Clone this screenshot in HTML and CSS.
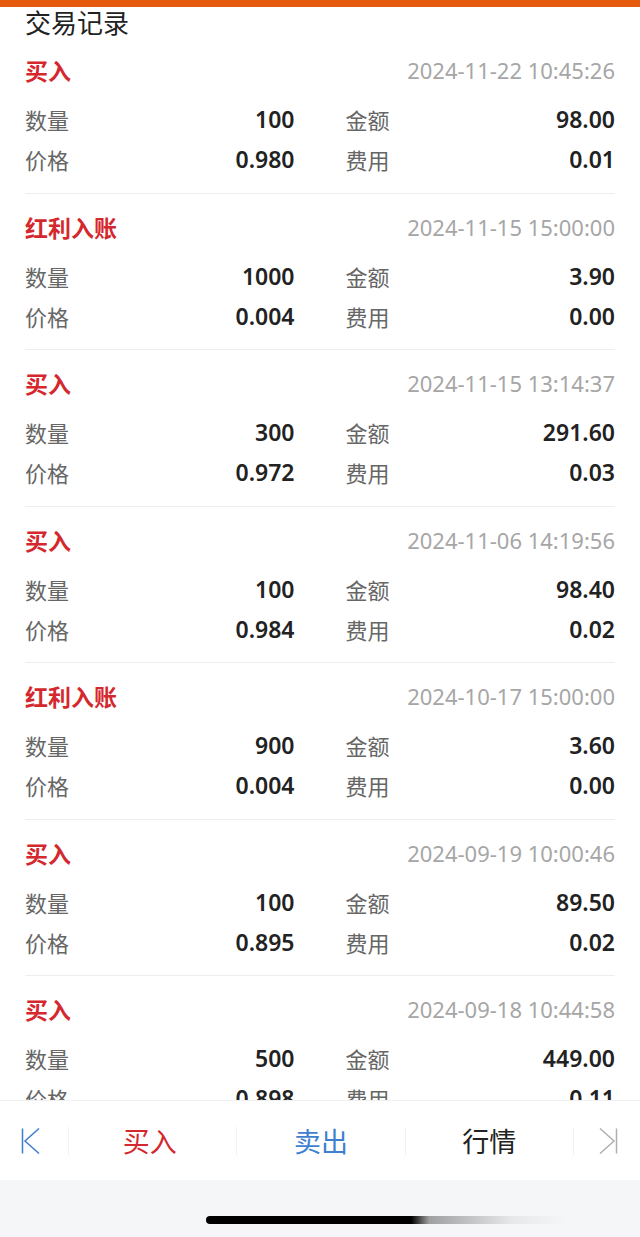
FILE: index.html
```html
<!DOCTYPE html>
<html lang="zh-CN">
<head>
  <meta charset="UTF-8">
  <title>交易记录</title>
  <link rel="stylesheet" href="styles.css">
</head>
<body>

<div class="topbar"></div>
<h1 class="title">交易记录</h1>

<div class="list">
  <div class="record">
    <div class="head"><span class="type">买入</span><span class="time">2024-11-22 10:45:26</span></div>
    <div class="row">
      <div class="cell"><span class="label">数量</span><span class="val">100</span></div>
      <div class="cell"><span class="label">金额</span><span class="val">98.00</span></div>
    </div>
    <div class="row">
      <div class="cell"><span class="label">价格</span><span class="val">0.980</span></div>
      <div class="cell"><span class="label">费用</span><span class="val">0.01</span></div>
    </div>
  </div>

  <div class="record">
    <div class="head"><span class="type">红利入账</span><span class="time">2024-11-15 15:00:00</span></div>
    <div class="row">
      <div class="cell"><span class="label">数量</span><span class="val">1000</span></div>
      <div class="cell"><span class="label">金额</span><span class="val">3.90</span></div>
    </div>
    <div class="row">
      <div class="cell"><span class="label">价格</span><span class="val">0.004</span></div>
      <div class="cell"><span class="label">费用</span><span class="val">0.00</span></div>
    </div>
  </div>

  <div class="record">
    <div class="head"><span class="type">买入</span><span class="time">2024-11-15 13:14:37</span></div>
    <div class="row">
      <div class="cell"><span class="label">数量</span><span class="val">300</span></div>
      <div class="cell"><span class="label">金额</span><span class="val">291.60</span></div>
    </div>
    <div class="row">
      <div class="cell"><span class="label">价格</span><span class="val">0.972</span></div>
      <div class="cell"><span class="label">费用</span><span class="val">0.03</span></div>
    </div>
  </div>

  <div class="record">
    <div class="head"><span class="type">买入</span><span class="time">2024-11-06 14:19:56</span></div>
    <div class="row">
      <div class="cell"><span class="label">数量</span><span class="val">100</span></div>
      <div class="cell"><span class="label">金额</span><span class="val">98.40</span></div>
    </div>
    <div class="row">
      <div class="cell"><span class="label">价格</span><span class="val">0.984</span></div>
      <div class="cell"><span class="label">费用</span><span class="val">0.02</span></div>
    </div>
  </div>

  <div class="record">
    <div class="head"><span class="type">红利入账</span><span class="time">2024-10-17 15:00:00</span></div>
    <div class="row">
      <div class="cell"><span class="label">数量</span><span class="val">900</span></div>
      <div class="cell"><span class="label">金额</span><span class="val">3.60</span></div>
    </div>
    <div class="row">
      <div class="cell"><span class="label">价格</span><span class="val">0.004</span></div>
      <div class="cell"><span class="label">费用</span><span class="val">0.00</span></div>
    </div>
  </div>

  <div class="record">
    <div class="head"><span class="type">买入</span><span class="time">2024-09-19 10:00:46</span></div>
    <div class="row">
      <div class="cell"><span class="label">数量</span><span class="val">100</span></div>
      <div class="cell"><span class="label">金额</span><span class="val">89.50</span></div>
    </div>
    <div class="row">
      <div class="cell"><span class="label">价格</span><span class="val">0.895</span></div>
      <div class="cell"><span class="label">费用</span><span class="val">0.02</span></div>
    </div>
  </div>

  <div class="record">
    <div class="head"><span class="type">买入</span><span class="time">2024-09-18 10:44:58</span></div>
    <div class="row">
      <div class="cell"><span class="label">数量</span><span class="val">500</span></div>
      <div class="cell"><span class="label">金额</span><span class="val">449.00</span></div>
    </div>
    <div class="row">
      <div class="cell"><span class="label">价格</span><span class="val">0.898</span></div>
      <div class="cell"><span class="label">费用</span><span class="val">0.11</span></div>
    </div>
  </div>
</div>

<!-- bottom toolbar -->
<div class="toolbar">
  <div class="tool first">
    <svg width="20" height="26" viewBox="0 0 20 26"><path d="M1.5 0.5V25.5M18 0.5L4 13L18 25.5" fill="none" stroke="#3f7fcf" stroke-width="1.5"/></svg>
  </div>
  <div class="tool buy">买入</div>
  <div class="tool sell">卖出</div>
  <div class="tool quote">行情</div>
  <div class="tool last">
    <svg width="20" height="26" viewBox="0 0 20 26"><path d="M18.5 0.5V25.5M2 0.5L16 13L2 25.5" fill="none" stroke="#b0b0b0" stroke-width="1.5"/></svg>
  </div>
</div>

<div class="safe">
  <div class="home"></div>
</div>

</body>
</html>
```

FILE: styles.css
```css
body {
  margin: 0;
  height: 1237px;
  display: flex;
  flex-direction: column;
  background: #fff;
  font-family: "Noto Sans", "Noto Sans CJK SC", sans-serif;
  color: #222;
}
.topbar {
  height: 7px;
  background: #e55a0c;
  flex: none;
}
.title {
  flex: none;
  margin: 0;
  padding: 0 25px;
  font-size: 26px;
  font-weight: 400;
  line-height: 32px;
  color: #222;
}
.list {
  flex: 1;
  overflow: hidden;
}
.record {
  margin: 0 25px;
  padding: 13px 0 13.5px;
  border-bottom: 1px solid #eeeeee;
}
.record:first-child {
  padding-top: 11px;
}
.head {
  display: flex;
  justify-content: space-between;
  align-items: center;
  height: 40px;
  margin-bottom: 9px;
}
.type {
  color: #d4282e;
  font-size: 23px;
  font-weight: 700;
}
.time {
  color: #a6a6a6;
  font-size: 22px;
}
.row {
  display: grid;
  grid-template-columns: 1fr 1fr;
  column-gap: 51px;
  height: 40px;
}
.cell {
  display: flex;
  justify-content: space-between;
  align-items: center;
}
.label {
  color: #666;
  font-size: 22px;
}
.val {
  color: #222;
  font-size: 23px;
  font-weight: 600;
}
.toolbar {
  flex: none;
  height: 80px;
  border-top: 1px solid #f0f0f0;
  box-sizing: border-box;
  display: grid;
  grid-template-columns: 68px 1fr 1fr 1fr 67px;
  align-items: center;
  background: #fff;
}
.tool {
  height: 28px;
  display: flex;
  align-items: center;
  justify-content: center;
  font-size: 27px;
  border-left: 1px solid #f2f2f2;
}
.tool.first {
  border-left: none;
  justify-content: flex-start;
  padding-left: 21px;
}
.tool.last {
  justify-content: flex-start;
  padding-left: 24px;
}
.buy {
  color: #d4282e;
  padding-right: 6px;
}
.sell {
  color: #3f7fcf;
}
.quote {
  color: #222;
}
.safe {
  flex: none;
  height: 57px;
  background: #f5f6f8;
  position: relative;
}
.home {
  position: absolute;
  left: 206px;
  top: 36px;
  width: 360px;
  height: 8px;
  border-radius: 4px;
  background: linear-gradient(to right, #000 0, #000 57%, rgba(0, 0, 0, 0.35) 62%, rgba(0, 0, 0, 0.06) 85%, rgba(0, 0, 0, 0) 100%);
}
```
